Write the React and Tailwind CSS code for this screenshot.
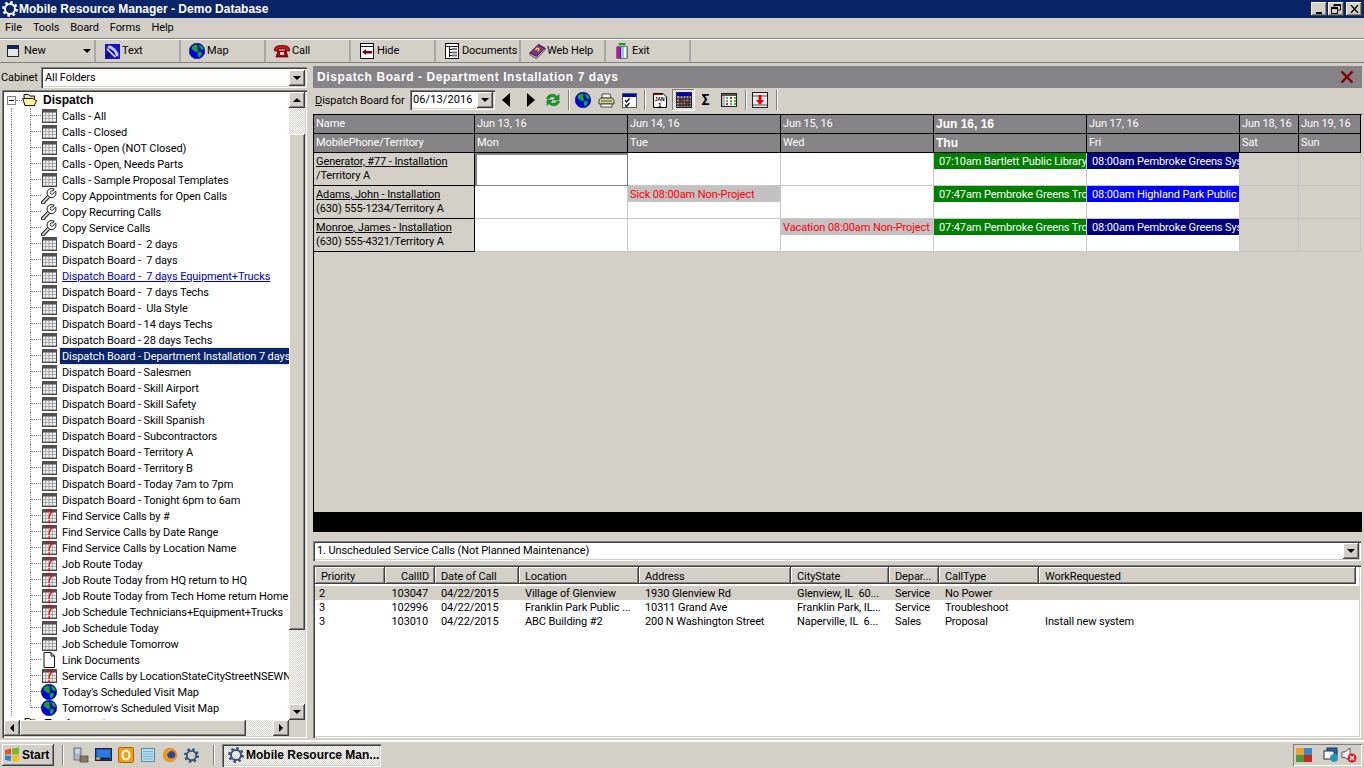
import React from "react";

const raised = "shadow-[inset_-1px_-1px_0_#404040,inset_1px_1px_0_#ffffff,inset_-2px_-2px_0_#808080]";
const sunken = "shadow-[inset_1px_1px_0_#808080,inset_2px_2px_0_#404040,inset_-1px_-1px_0_#ffffff,inset_-2px_-2px_0_#d4d0c8]";
const dither = "bg-[repeating-conic-gradient(#ffffff_0_25%,#d4d0c8_0_50%)] bg-[length:2px_2px]";
const boldF = "font-bold font-['Liberation_Sans',sans-serif] tracking-normal";

const Gear = ({ c = "#fff", s = 16 }) => (
  <svg width={s} height={s} viewBox="0 0 16 16" className="shrink-0">
    <circle cx="8" cy="8" r="5" fill="none" stroke={c} strokeWidth="2" />
    <circle cx="8" cy="8" r="6.7" fill="none" stroke={c} strokeWidth="2.4" strokeDasharray="2.6 2.66" />
  </svg>
);
const GridI = ({ q }) => (
  <svg width="16" height="16" viewBox="0 0 16 16" className="shrink-0">
    <rect x="1" y="1" width="15" height="14" fill="#efefef" />
    <path d="M1 7.500H16M1 10.500H16M1 13.500H16M4.500 4V15M8 4V15M11.500 4V15" stroke="#a8a8a8" />
    <rect x="1.500" y="1.500" width="14" height="13" fill="none" stroke="#444" />
    <rect x="1" y="1" width="15" height="3.500" fill="#505050" />
    {q && <path d="M6 3.500C6 .5 10.500 .5 10.500 3.500C10.500 6 8.200 6 8.200 8.500V11M8.200 12V15" fill="none" stroke="#e00000" strokeWidth="1.200" />}
  </svg>
);
const Wrench = () => (
  <svg width="16" height="16" viewBox="0 0 16 16" className="shrink-0">
    <path d="M2 14.500L8.500 7.500" stroke="#111" strokeWidth="4" strokeLinecap="round" />
    <path d="M2 14.500L8.500 7.500" stroke="#c8c8c8" strokeWidth="2" strokeLinecap="round" />
    <circle cx="10.500" cy="5" r="4.500" fill="#fff" stroke="#111" />
    <circle cx="11" cy="4.500" r="1.800" fill="#fff" stroke="#111" strokeWidth=".8" />
    <path d="M11.500 3.500L14 0H16V3L13 5.500Z" fill="#fff" />
    <path d="M11.800 3.200L13.200 .9M12.800 4.500L15.200 3.300" stroke="#111" />
  </svg>
);
const DocI = () => (
  <svg width="16" height="16" viewBox="0 0 16 16" className="shrink-0">
    <path d="M3 .5H10L13.500 4V15.500H3Z" fill="#fff" stroke="#111" />
    <path d="M10 .5V4H13.500" fill="none" stroke="#111" />
  </svg>
);
const Globe = ({ s = 16 }) => (
  <svg width={s} height={s} viewBox="0 0 16 16" className="shrink-0">
    <circle cx="8" cy="8" r="7.800" fill="#0000e0" stroke="#00004a" strokeWidth="0.5" />
    <path d="M3 3.500L6 1.500L9 2.500L8 5L9.500 7L7.500 9.500L5 7.500L2.800 6.500ZM10 1.500L13.500 3.500L15 7L12 6.500L10.500 4ZM8.500 9.500L12 8.500L13 11L10.500 14.500L9 13Z" fill="#12a820" />
  </svg>
);
const Folder = () => (
  <svg width="15" height="14" viewBox="0 0 15 14" className="shrink-0">
    <path d="M2 3V1.500H6.500L8 3H12.500V12.500H3Z" fill="#e9e6a0" stroke="#111" />
    <path d="M.7 5.500H10.500L14.400 7.500L12.500 12.500H3Z" fill="#fff38a" stroke="#111" />
  </svg>
);

const NewI = () => (<svg width="12" height="12" viewBox="0 0 12 12"><rect x=".5" y=".5" width="11" height="11" fill="#e8e8e8" stroke="#222" /><rect x="1" y="1" width="10" height="3" fill="#0a246a" /></svg>);
const TextI = () => (<svg width="15" height="15" viewBox="0 0 16 16"><rect width="16" height="16" fill="#1414d0" /><path d="M2 5L11 14M5 2L14 11" stroke="#fff" strokeWidth="1.500" /><path d="M3 3C8 3 13 8 13 13" fill="none" stroke="#c8c8c8" strokeWidth="3" /><path d="M1 15L5 10" stroke="#111" strokeWidth="2" /></svg>);
const PhoneI = () => (<svg width="16" height="14" viewBox="0 0 16 14"><path d="M.5 5C1 2 4 1.500 8 1.500S15 2 15.500 5V7H11.500V5H4.500V7H.5Z" fill="#d81010" stroke="#300" strokeWidth=".7" /><path d="M4 7H12L14 13H2Z" fill="#b80000" stroke="#300" strokeWidth=".7" /><rect x="6" y="8" width="4" height="3" fill="#ffd0d0" /></svg>);
const HideI = () => (<svg width="14" height="16" viewBox="0 0 14 16"><rect x=".5" y=".5" width="13" height="15" fill="#fff" stroke="#111" /><path d="M.5 3.500H13.500" stroke="#111" /><path d="M2 9L6 6V8H12V10.500H6V12Z" fill="#800000" /></svg>);
const DocsI = () => (<svg width="14" height="16" viewBox="0 0 14 16"><rect x=".5" y=".5" width="13" height="15" fill="#fff" stroke="#111" /><path d="M.5 3.500H13.500M4.500 3.500V14M4.500 6.500H7M4.500 9.500H7M4.500 12.500H7" stroke="#111" /><path d="M7 5H12V7H7ZM7 8.500H12V10.500H7ZM7 11.500H12V13.500H7Z" fill="#777" /></svg>);
const BookI = () => (<svg width="17" height="16" viewBox="0 0 18 16"><path d="M1 10L10 1L17 5L8 14Z" fill="#80308a" stroke="#2b0a30" /><path d="M1 10V12L8 16L17 7V5L8 14Z" fill="#e6d8e8" stroke="#2b0a30" strokeWidth=".8" /><path d="M7 7C8 4 12 5 10 7.500L9 8" fill="none" stroke="#ffe020" strokeWidth="1.400" /></svg>);
const ExitI = () => (<svg width="12" height="16" viewBox="0 0 12 16"><rect x="3" y="0" width="6" height="2" fill="#16c016" stroke="#063" strokeWidth=".5" /><rect x=".5" y="3.500" width="11" height="12" fill="#111" /><rect x="1" y="4" width="3.500" height="11" fill="#c010b0" /><rect x="5" y="4" width="5.500" height="11" fill="#7ad0e8" /><rect x="8" y="4" width="2.500" height="11" fill="#fff" /></svg>);

const Tri = ({ d }) => {
  const p = { u: "M4 2L0 6H8Z", d: "M0 2H8L4 6Z", l: "M6 0V8L2 4Z", r: "M2 0V8L6 4Z" }[d];
  return <svg width="8" height="8" viewBox="0 0 8 8"><path d={p} fill="#000" /></svg>;
};
const SB = ({ d }) => (
  <div className={`w-[16px] h-[16px] shrink-0 bg-[#d4d0c8] flex items-center justify-center ${raised}`}><Tri d={d} /></div>
);

const tools = [
  ["New", <NewI />, "w-[96px]"], ["Text", <TextI />, "w-[85px]"], ["Map", <Globe />, "w-[85px]"], ["Call", <PhoneI />, "w-[85px]"],
  ["Hide", <HideI />, "w-[85px]"], ["Documents", <DocsI />, "w-[85px]"], ["Web Help", <BookI />, "w-[85px]"], ["Exit", <ExitI />, "w-[85px]"],
];

const tree = [
  ["g", "Calls - All"], ["g", "Calls - Closed"], ["g", "Calls - Open (NOT Closed)"], ["g", "Calls - Open, Needs Parts"], ["g", "Calls - Sample Proposal Templates"],
  ["w", "Copy Appointments for Open Calls"], ["w", "Copy Recurring Calls"], ["w", "Copy Service Calls"],
  ["g", "Dispatch Board -  2 days"], ["g", "Dispatch Board -  7 days"], ["g", "Dispatch Board -  7 days Equipment+Trucks", "link"], ["g", "Dispatch Board -  7 days Techs"],
  ["g", "Dispatch Board -  Ula Style"], ["g", "Dispatch Board - 14 days Techs"], ["g", "Dispatch Board - 28 days Techs"], ["g", "Dispatch Board - Department Installation 7 days", "sel"],
  ["g", "Dispatch Board - Salesmen"], ["g", "Dispatch Board - Skill Airport"], ["g", "Dispatch Board - Skill Safety"], ["g", "Dispatch Board - Skill Spanish"],
  ["g", "Dispatch Board - Subcontractors"], ["g", "Dispatch Board - Territory A"], ["g", "Dispatch Board - Territory B"], ["g", "Dispatch Board - Today 7am to 7pm"], ["g", "Dispatch Board - Tonight 6pm to 6am"],
  ["q", "Find Service Calls by #"], ["q", "Find Service Calls by Date Range"], ["q", "Find Service Calls by Location Name"], ["q", "Job Route Today"], ["q", "Job Route Today from HQ return to HQ"],
  ["q", "Job Route Today from Tech Home return Home"], ["q", "Job Schedule Technicians+Equipment+Trucks"], ["g", "Job Schedule Today"], ["g", "Job Schedule Tomorrow"], ["d", "Link Documents"],
  ["q", "Service Calls by LocationStateCityStreetNSEWN"], ["m", "Today's Scheduled Visit Map"], ["m", "Tomorrow's Scheduled Visit Map"],
];
const icon = (k) => k === "g" ? <GridI /> : k === "q" ? <GridI q /> : k === "w" ? <Wrench /> : k === "d" ? <DocI /> : <Globe />;

const TreeRow = ({ k, t, f, last }) => (
  <div className="flex h-[16px] shrink-0">
    <div className="w-[7px] shrink-0" />
    <div className="w-[19px] shrink-0 border-l border-dotted border-[#808080]" />
    <div className={`w-[11px] shrink-0 flex flex-col border-l border-dotted border-[#808080] ${last ? "h-[8px]" : ""}`}>
      <div className="h-[8px] w-full border-b border-dotted border-[#808080]" />
    </div>
    {icon(k)}
    <div className={`ml-[3px] pl-[2px] pr-[1px] h-[16px] pt-[1px] leading-[15px] whitespace-pre ${f === "sel" ? "bg-[#0a246a] text-white outline-1 outline-dotted outline-[#d4d0c8]" : f === "link" ? "text-[#0000c0] underline" : "text-black"}`}>{t}</div>
  </div>
);

const cols = "grid-cols-[161px_153px_153px_153px_153px_153px_59px_62px]";
const Hd = ({ t, b }) => (
  <div className={`h-[19px] pl-[2px] leading-[18px] text-white bg-[#868386] border-r border-b border-black whitespace-nowrap overflow-hidden ${b ? `${boldF} text-[12px]` : "text-[11px]"}`}>{t}</div>
);
const Ev = ({ t, c }) => (
  <div className={`h-[16px] pt-[1px] leading-[15px] whitespace-nowrap overflow-hidden text-[11px] ${c}`}>{t}</div>
);
const green = "bg-[#008000] text-white pl-[5px]";
const navy = "bg-[#000080] text-white pl-[5px]";
const blue = "bg-[#0000ff] text-white pl-[5px]";
const grey = "bg-[#c4c1c4] text-[#ff0000] pl-[2px]";

const Cell = ({ e, c, off, focus }) => (
  <div className={`h-[33px] border-r border-b overflow-hidden ${off ? "bg-[#d4d0c8] border-[#c4c4c8]" : "bg-white border-[#c8c8c8]"} ${focus ? "border border-l-[#808080] border-t-[#808080] border-r-[#808080] border-b-[#808080] shadow-[inset_1px_1px_0_#808080]" : ""}`}>
    {e && <Ev t={e} c={c} />}
  </div>
);
const NameC = ({ a, b }) => (
  <div className="h-[33px] pl-[2px] bg-[#d4d0c8] border-r border-b border-black text-[11px] leading-[14px] pt-[2px] whitespace-nowrap overflow-hidden">
    <div className="underline">{a}</div><div>{b}</div>
  </div>
);

const listCols = [["Priority", 70], ["CallID", 50, "r"], ["Date of Call", 84], ["Location", 120], ["Address", 152], ["CityState", 98], ["Depar...", 50], ["CallType", 100], ["WorkRequested", 317]];
const rows = [
  ["2", "103047", "04/22/2015", "Village of Glenview", "1930 Glenview Rd", "Glenview, IL  60...", "Service", "No Power", ""],
  ["3", "102996", "04/22/2015", "Franklin Park Public ...", "10311 Grand Ave", "Franklin Park, IL...", "Service", "Troubleshoot", ""],
  ["3", "103010", "04/22/2015", "ABC Building #2", "200 N Washington Street", "Naperville, IL  6...", "Sales", "Proposal", "Install new system"],
];

const sepCls = "w-[2px] h-[20px] border-l border-r border-l-[#808080] border-r-white shrink-0";

export default function App() {
  return (
    <div className="w-[1364px] h-[768px] overflow-hidden bg-[#d4d0c8] flex flex-col text-black text-[11px] tracking-[-0.1px] font-['Roboto',sans-serif]">
      {/* title bar */}
      <div className="h-[18px] shrink-0 bg-[#0a246a] flex items-center pl-[2px] pr-[2px]">
        <Gear />
        <div className={`ml-[1px] text-white text-[12px] whitespace-nowrap ${boldF}`}>Mobile Resource Manager - Demo Database</div>
        <div className="ml-auto flex">
          <div className={`w-[16px] h-[14px] bg-[#d4d0c8] flex items-end justify-center pb-[2px] ${raised}`}><div className="w-[6px] h-[2px] bg-black" /></div>
          <div className={`w-[16px] h-[14px] ml-[1px] bg-[#d4d0c8] flex items-center justify-center ${raised}`}>
            <svg width="10" height="10" viewBox="0 0 10 10"><path d="M3 .5H9.500V6H7M3 .5V3M3 1.500H9.500" fill="none" stroke="#000" /><rect x=".5" y="3.500" width="6" height="6" fill="none" stroke="#000" /><path d="M0 4.500H7" stroke="#000" /></svg>
          </div>
          <div className={`w-[16px] h-[14px] ml-[2px] bg-[#d4d0c8] flex items-center justify-center ${raised}`}>
            <svg width="9" height="8" viewBox="0 0 9 8"><path d="M1 0L8 8M8 0L1 8" stroke="#000" strokeWidth="1.300" /></svg>
          </div>
        </div>
      </div>
      {/* menu */}
      <div className="h-[21px] shrink-0 flex items-center pl-[5px] gap-[11px] border-b border-[#808080]">
        {["File", "Tools", "Board", "Forms", "Help"].map((m) => <span key={m}>{m}</span>)}
      </div>
      {/* toolbar */}
      <div className="h-[24px] shrink-0 flex border-t border-b border-t-white border-b-[#808080]">
        {tools.map(([t, ic, w], i) => (
          <div key={t} className={`${w} h-[22px] shrink-0 flex items-center border-r-2 border-r-[#a8a8a8] pl-[7px]`}>
            {i === 0 ? <NewI /> : <div className="w-[18px] flex items-center justify-center">{ic}</div>}
            <span className={i === 0 ? "ml-[5px]" : "ml-[1px]"}>{t}</span>
            {i === 0 && <div className="ml-auto mr-[3px]"><Tri d="d" /></div>}
          </div>
        ))}
      </div>
      {/* main */}
      <div className="flex-1 min-h-0 flex">
        {/* left */}
        <div className="w-[313px] shrink-0 flex flex-col pl-[2px] pr-[6px] pt-[4px] pb-[2px]">
          <div className="h-[21px] shrink-0 flex items-center">
            <span className="w-[40px] -ml-[1px] pt-[1px]">Cabinet</span>
            <div className={`flex-1 h-[21px] bg-white pl-[4px] pr-[2px] flex items-center ${sunken}`}>
              <span className="pt-[1px]">All Folders</span>
              <div className="ml-auto"><SB d="d" /></div>
            </div>
          </div>
          <div className={`mt-[2px] flex-1 min-h-0 bg-white p-[2px] flex flex-col ${sunken}`}>
            <div className="flex-1 min-h-0 flex">
              <div className="flex-1 min-w-0 overflow-hidden flex flex-col">
                <div className="flex h-[16px] shrink-0 items-center">
                  <div className="ml-[3px] w-[9px] h-[9px] border border-[#808080] bg-white flex items-center justify-center shrink-0"><div className="w-[5px] h-[1px] bg-black" /></div>
                  <div className="w-[6px] border-b border-dotted border-[#808080]" />
                  <Folder />
                  <span className={`ml-[6px] text-[12px] ${boldF}`}>Dispatch</span>
                </div>
                {tree.map(([k, t, f], i) => <TreeRow key={t} k={k} t={t} f={f} last={i === tree.length - 1} />)}
                <div className="flex h-[16px] shrink-0 items-center pl-[19px]">
                  <Folder />
                  <span className={`ml-[6px] text-[12px] ${boldF}`}>Equipment</span>
                </div>
              </div>
              <div className="w-[16px] shrink-0 flex flex-col">
                <SB d="u" />
                <div className={`h-[26px] shrink-0 ${dither}`} />
                <div className={`h-[496px] shrink-0 bg-[#d4d0c8] ${raised}`} />
                <div className={`flex-1 ${dither}`} />
                <SB d="d" />
              </div>
            </div>
            <div className="h-[16px] shrink-0 flex">
              <SB d="l" />
              <div className={`w-[226px] bg-[#d4d0c8] ${raised}`} />
              <div className={`flex-1 ${dither}`} />
              <SB d="r" />
              <div className="w-[16px] bg-[#d4d0c8]" />
            </div>
          </div>
        </div>
        {/* right */}
        <div className="flex-1 min-w-0 flex flex-col pt-[3px] pb-[2px]">
          <div className="h-[22px] shrink-0 mr-[2px] bg-[#868386] flex items-center pl-[4px] pr-[8px]">
            <span className="text-white font-bold text-[12px] font-['Liberation_Sans',sans-serif] tracking-[0.6px] whitespace-nowrap">Dispatch Board - Department Installation 7 days</span>
            <svg className="ml-auto" width="14" height="12" viewBox="0 0 14 12"><path d="M1.500 .5L12.500 11.500M12.500 .5L1.500 11.500" stroke="#800000" strokeWidth="2.400" /></svg>
          </div>
          {/* board toolbar */}
          <div className="h-[24px] shrink-0 flex items-center pl-[2px]">
            <span className="whitespace-nowrap w-[95px] pt-[2px]"><span className="underline">D</span>ispatch Board for</span>
            <div className={`w-[85px] h-[20px] bg-white pl-[3px] pr-[2px] flex items-center ${sunken}`}>
              <span className="pt-[1px] tracking-[0.1px]">06/13/2016</span>
              <div className="ml-auto"><SB d="d" /></div>
            </div>
            <svg className="ml-[7px] shrink-0" width="9" height="14" viewBox="0 0 9 14"><path d="M8 0V14L0 7Z" /></svg>
            <svg className="ml-[15px] shrink-0" width="9" height="14" viewBox="0 0 9 14"><path d="M1 0V14L9 7Z" /></svg>
            <svg className="ml-[10px] shrink-0" width="16" height="16" viewBox="0 0 16 16"><path d="M1.500 6.500C3 1.500 9 1 12 4.500L14 2.500V8H8.500L10.500 6C8.500 4 5.500 4.500 4.500 6.500Z" fill="#12a012" stroke="#063" strokeWidth=".6" /><path d="M14.500 9.500C13 14.500 7 15 4 11.500L2 13.500V8H7.500L5.500 10C7.500 12 10.500 11.500 11.500 9.500Z" fill="#12a012" stroke="#063" strokeWidth=".6" /></svg>
            <div className={`ml-[7px] mr-[5px] ${sepCls}`} />
            <Globe />
            <svg className="ml-[7px] shrink-0" width="17" height="15" viewBox="0 0 17 15"><path d="M4 1H12L13 5H4Z" fill="#fff" stroke="#222" strokeWidth=".8" /><path d="M1 6.500L3 5H14L16 6.500V11H1Z" fill="#d4d486" stroke="#222" strokeWidth=".8" /><path d="M3 11H14V14H3Z" fill="#fff" stroke="#222" strokeWidth=".8" /><path d="M3 8H14" stroke="#555" /></svg>
            <svg className="ml-[7px] shrink-0" width="15" height="15" viewBox="0 0 15 15"><rect x=".5" y=".5" width="14" height="14" fill="#fff" stroke="#555" /><rect x="1" y="1" width="13" height="3" fill="#0000c0" /><path d="M3 7L4.500 9L7.500 5.500M3 11.500L4.500 13.500L7.500 10" fill="none" stroke="#000" strokeWidth="1.200" /></svg>
            <div className={`ml-[7px] mr-[7px] ${sepCls}`} />
            <svg className="shrink-0" width="14" height="16" viewBox="0 0 14 16"><path d="M.5 1.500H10L13.500 5V15.500H.5Z" fill="#fff" stroke="#000" /><path d="M1 2.500H10" stroke="#d00000" /><text x="1.800" y="8.500" fontSize="5" fontWeight="700" fontFamily="Liberation Sans, sans-serif">JAN</text><text x="5" y="14.500" fontSize="6" fontWeight="700" fontFamily="Liberation Sans, sans-serif">1</text></svg>
            <div className={`ml-[5px] w-[23px] h-[22px] shrink-0 flex items-center justify-center ${dither} shadow-[inset_-1px_-1px_0_#ffffff,inset_1px_1px_0_#808080]`}>
              <svg width="16" height="16" viewBox="0 0 16 16" className="block"><rect x=".5" y=".5" width="15" height="15" fill="#a89a9a" stroke="#222" /><rect x="1" y="1" width="14" height="3" fill="#0000d0" /><path d="M1 7H15M1 10H15M1 13H15M4 4V15M7 4V15M10 4V15M13 4V15" stroke="#111" /><path d="M4.500 7.500H6.500V9.500H4.500ZM10.500 10.500H12.500V12.500H10.500Z" fill="#d00000" /></svg>
            </div>
            <span className="ml-[5px] w-[11px] text-[14px] leading-none font-bold text-center">Σ</span>
            <svg className="ml-[10px] shrink-0" width="16" height="14" viewBox="0 0 16 14"><rect x=".5" y=".5" width="15" height="13" fill="#fff" stroke="#222" /><rect x="1" y="1" width="14" height="2" fill="#555" /><rect x="1" y="3" width="3" height="10" fill="#b8b8b8" /><path d="M5 5H7M9 5H11M13 5H15M5 8H7M9 8H11M13 8H15M5 11H7M9 11H11M13 11H15" stroke="#119911" strokeWidth="1.400" /><path d="M9 5H11M5 11H7" stroke="#e00000" strokeWidth="1.400" /></svg>
            <div className={`ml-[8px] mr-[5px] ${sepCls}`} />
            <svg className="shrink-0" width="16" height="16" viewBox="0 0 16 16"><rect x=".5" y=".5" width="15" height="15" fill="#e8e8e8" stroke="#222" /><path d="M1 4H15M1 13H15" stroke="#555" /><path d="M6.500 3H9.500V8H12L8 13L4 8H6.500Z" fill="#e80000" /></svg>
            <div className={`ml-[8px] ${sepCls}`} />
          </div>
          {/* board */}
          <div className="mt-[2px] flex-none h-[418px] mr-[2px] border-l border-t border-black flex flex-col">
            <div className={`grid ${cols} w-[1048px]`}>
              {["Name", "Jun 13, 16", "Jun 14, 16", "Jun 15, 16"].map((t) => <Hd key={t} t={t} />)}
              <Hd t="Jun 16, 16" b />
              {["Jun 17, 16", "Jun 18, 16", "Jun 19, 16"].map((t) => <Hd key={t} t={t} />)}
              {["MobilePhone/Territory", "Mon", "Tue", "Wed"].map((t) => <Hd key={t} t={t} />)}
              <Hd t="Thu" b />
              {["Fri", "Sat", "Sun"].map((t) => <Hd key={t} t={t} />)}

              <NameC a="Generator, #77 - Installation" b="/Territory A" />
              <Cell focus /><Cell /><Cell />
              <Cell e="07:10am Bartlett Public Library" c={green} />
              <Cell e="08:00am Pembroke Greens System Upgrade" c={navy} />
              <Cell off /><Cell off />

              <NameC a="Adams, John - Installation" b="(630) 555-1234/Territory A" />
              <Cell /><Cell e="Sick 08:00am Non-Project" c={grey} /><Cell />
              <Cell e="07:47am Pembroke Greens Troubleshoot" c={green} />
              <Cell e="08:00am Highland Park Public" c={blue} />
              <Cell off /><Cell off />

              <NameC a="Monroe, James - Installation" b="(630) 555-4321/Territory A" />
              <Cell /><Cell /><Cell e="Vacation 08:00am Non-Project" c={grey} />
              <Cell e="07:47am Pembroke Greens Troubleshoot" c={green} />
              <Cell e="08:00am Pembroke Greens System Upgrade" c={navy} />
              <Cell off /><Cell off />
            </div>
            <div className="flex-1" />
            <div className="h-[20px] shrink-0 bg-black" />
          </div>
          {/* combo */}
          <div className={`mt-[9px] h-[20px] shrink-0 mr-[3px] bg-white pl-[4px] pr-[2px] flex items-center ${sunken}`}>
            <span className="pt-[1px]">1. Unscheduled Service Calls (Not Planned Maintenance)</span>
            <div className="ml-auto"><SB d="d" /></div>
          </div>
          {/* list */}
          <div className={`mt-[4px] flex-1 min-h-0 mr-[3px] bg-white p-[2px] flex flex-col ${sunken}`}>
            <div className="h-[17px] shrink-0 flex">
              {listCols.map(([t, w, al]) => (
                <div key={t} style={{ width: w }} className={`h-[17px] shrink-0 bg-[#d4d0c8] pt-[1px] leading-[18px] whitespace-nowrap overflow-hidden ${raised} ${al ? "text-right pr-[6px]" : "pl-[6px]"}`}>{t}</div>
              ))}
            </div>
            <div className="mt-[2px]">
              {rows.map((r, i) => (
                <div key={r[1]} className={`h-[14px] flex ${i === 0 ? "bg-[#d4d0c8]" : ""}`}>
                  {r.map((c, j) => (
                    <div key={j} style={{ width: listCols[j][1] }} className={`shrink-0 pt-[1px] leading-[13px] whitespace-pre overflow-hidden ${j === 1 ? "text-right pr-[7px]" : j === 0 ? "pl-[4px]" : "pl-[6px]"}`}>{c}</div>
                  ))}
                </div>
              ))}
            </div>
          </div>
        </div>
      </div>
      {/* taskbar */}
      <div className="h-[28px] shrink-0 border-t-2 border-t-white flex items-center pl-[2px] pr-[2px]">
        <div className={`w-[52px] h-[22px] bg-[#d4d0c8] flex items-center pl-[2px] text-[12px] ${boldF} ${raised}`}>
          <svg width="16" height="16" viewBox="0 0 16 16" className="shrink-0"><path d="M1 3L7 1.500V7.500H1Z" fill="#e8502a" /><path d="M8 1.500L15 .5V7.500H8Z" fill="#7cb82a" /><path d="M1 8.500H7V14L1 13Z" fill="#2a88d8" /><path d="M8 8.500H15V15L8 14Z" fill="#f0c020" /></svg>
          <span className="ml-[2px]">Start</span>
        </div>
        <div className="ml-[8px] w-[2px] h-[20px] border-l border-r border-l-[#808080] border-r-white" />
        <div className="ml-[9px] flex items-center gap-[6px]">
          <svg width="16" height="16" viewBox="0 0 16 16"><rect x="1" y="1" width="7" height="12" fill="#a8b8c8" stroke="#456" strokeWidth=".7" /><path d="M2.500 3H6.500M2.500 5H6.500" stroke="#fff" /><rect x="7" y="9" width="8" height="6" fill="#8a7a68" stroke="#443" strokeWidth=".7" /></svg>
          <svg width="17" height="16" viewBox="0 0 17 16"><rect x=".5" y="1.500" width="16" height="12" fill="#1c58b8" stroke="#223" /><rect x="2" y="3" width="13" height="7" fill="#2c7ae0" /><rect x="6" y="11" width="9" height="1.500" fill="#111" /><rect x="1.500" y="10.500" width="3" height="2" fill="#ffd020" /></svg>
          <svg width="16" height="16" viewBox="0 0 16 16"><rect x=".5" y=".5" width="15" height="15" rx="1" fill="#f4a010" stroke="#b06000" /><ellipse cx="8" cy="8" rx="3.500" ry="4.500" fill="none" stroke="#fff" strokeWidth="2" /></svg>
          <svg width="16" height="16" viewBox="0 0 16 16"><rect x="1.500" y="1.500" width="13" height="13" fill="#b8dcf0" stroke="#5a8aa8" /><path d="M3 4.500H13M3 7H13M3 9.500H13M3 12H13" stroke="#7ab0d0" /></svg>
          <svg width="16" height="16" viewBox="0 0 16 16"><circle cx="8" cy="8" r="7" fill="#e8701a" /><circle cx="9" cy="8" r="4" fill="#2a4a98" /><path d="M1.500 6C3 1 11 0 14 5C11 3 8 3.500 7 5.500C5 6 4.500 8 6 10C8 12.500 12 11.500 14.500 8.500C14 14 7 16.500 3 13C1 11 1 8 1.500 6Z" fill="#f09a1c" /></svg>
          <Gear c="#33507c" s={15} />
        </div>
        <div className="ml-[14px] w-[2px] h-[20px] border-l border-r border-l-[#808080] border-r-white" />
        <div className={`ml-[7px] w-[159px] h-[23px] flex items-center pl-[6px] text-[12px] ${boldF} ${dither} ${sunken}`}>
          <Gear c="#33507c" />
          <span className="ml-[2px] whitespace-nowrap">Mobile Resource Man...</span>
        </div>
        <div className="ml-auto w-[69px] h-[22px] flex items-center pl-[3px] shadow-[inset_1px_1px_0_#808080,inset_-1px_-1px_0_#ffffff]">
          <svg width="16" height="16" viewBox="0 0 16 16" className="shrink-0"><rect x="0" y="1" width="8" height="7" fill="#f0a030" /><rect x="8" y="1" width="8" height="7" fill="#3a8ac8" /><rect x="0" y="8" width="8" height="7" fill="#4a9a3a" /><rect x="8" y="8" width="8" height="7" fill="#c82a20" /></svg>
          <svg width="16" height="16" viewBox="0 0 16 16" className="ml-[11px] shrink-0"><rect x="4" y="1" width="10" height="8" fill="#2a6ac0" stroke="#134" /><rect x="1" y="4" width="10" height="8" fill="#fff" stroke="#134" /><circle cx="11" cy="11" r="4" fill="#1a9ad8" /><path d="M9 10L12 9L13 12L10 13Z" fill="#2aa83a" /></svg>
          <svg width="16" height="16" viewBox="0 0 16 16" className="ml-[2px] shrink-0"><path d="M1 5H4L9 1V14L4 10.500H1Z" fill="#fff" stroke="#555" /><circle cx="11" cy="11" r="4.500" fill="#e02020" /><path d="M9 9L13 13M13 9L9 13" stroke="#fff" strokeWidth="1.300" /></svg>
        </div>
      </div>
    </div>
  );
}
